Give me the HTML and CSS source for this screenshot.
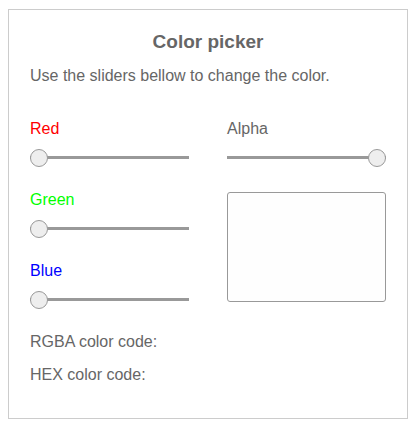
FILE: index.html
```html
<!DOCTYPE html>
<html>
<head>
<meta charset="utf-8">
<link rel="stylesheet" href="styles.css">
</head>
<body>
<div class="card">
  <h1 class="title">Color picker</h1>
  <p class="desc">Use the sliders bellow to change the color.</p>
  <div class="grid">
    <div class="col">
      <div class="field">
        <div class="label red">Red</div>
        <div class="slider"><div class="track"></div><div class="thumb" style="left:0%"></div></div>
      </div>
      <div class="field">
        <div class="label green">Green</div>
        <div class="slider"><div class="track"></div><div class="thumb" style="left:0%"></div></div>
      </div>
      <div class="field">
        <div class="label blue">Blue</div>
        <div class="slider"><div class="track"></div><div class="thumb" style="left:0%"></div></div>
      </div>
    </div>
    <div class="col">
      <div class="field">
        <div class="label">Alpha</div>
        <div class="slider"><div class="track"></div><div class="thumb" style="left:100%"></div></div>
      </div>
      <div class="preview"></div>
    </div>
  </div>
  <p class="code first">RGBA color code:</p>
  <p class="code">HEX color code:</p>
</div>
</body>
</html>
```
FILE: styles.css
```css
html, body {
  margin: 0;
  padding: 0;
  background: #fff;
}
body {
  font-family: "Liberation Sans", Arial, sans-serif;
  color: #666;
}
.card {
  box-sizing: border-box;
  width: 400px;
  height: 410px;
  margin: 9px 0 0 8px;
  border: 1px solid #ccc;
  padding: 21px 21px 0 21px;
}
.title {
  margin: 0;
  font-size: 19px;
  line-height: 22px;
  font-weight: bold;
  text-align: center;
  color: #666;
}
.desc {
  margin: 13px 0 0 0;
  font-size: 16px;
  line-height: 19px;
}
.grid {
  display: grid;
  grid-template-columns: 159px 159px;
  column-gap: 38px;
  margin-top: 34px;
}
.col {
  display: flex;
  flex-direction: column;
}
.field {
  margin-bottom: 23px;
}
.label {
  font-size: 16px;
  line-height: 19px;
}
.red { color: #f00; }
.green { color: #0f0; }
.blue { color: #00f; }
.slider {
  position: relative;
  height: 18px;
  margin-top: 11px;
  margin-left: 9px;
  margin-right: 9px;
}
.track {
  position: absolute;
  left: -9px;
  right: -9px;
  top: 7px;
  height: 3px;
  background: #999;
}
.thumb {
  position: absolute;
  top: 0;
  width: 18px;
  height: 18px;
  margin-left: -9px;
  box-sizing: border-box;
  border: 1px solid #999;
  border-radius: 50%;
  background: #eee;
}
.preview {
  box-sizing: border-box;
  height: 110px;
  border: 1px solid #999;
  border-radius: 3px;
  background: #fefefe;
  margin-top: 2px;
}
.code {
  margin: 14px 0 0 0;
  font-size: 16px;
  line-height: 19px;
}
.code.first {
  margin-top: 0;
}
```
